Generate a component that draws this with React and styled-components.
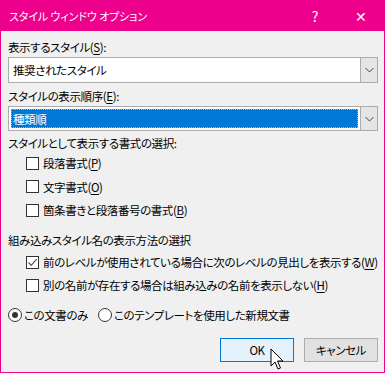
import React from "react";
import styled, { createGlobalStyle } from "styled-components";

const Global = createGlobalStyle`
  html, body { margin: 0; padding: 0; background: #fff; }
  body { font-family: "Noto Sans CJK JP", "Noto Sans", sans-serif; font-size: 11.5px; letter-spacing: -0.4px; color: #000; }
  * { box-sizing: border-box; }
`;

const Window = styled.div`
  position: relative;
  width: 385px;
  height: 373px;
  border: 1px solid #ec008c;
  border-top: none;
  background: #f0f0f0;
  overflow: hidden;
  font-feature-settings: "palt";
`;

const TitleBar = styled.div`
  height: 31px;
  background: #ec008c;
  color: #fff;
  display: flex;
  align-items: center;
  padding-left: 8px;
  font-size: 11px;
`;

const Title = styled.div`
  flex: 1;
  letter-spacing: -0.1px;
`;

const TitleButton = styled.div`
  width: 46px;
  height: 31px;
  display: flex;
  align-items: center;
  justify-content: center;
  font-size: 14px;
  letter-spacing: 0;
`;

const Content = styled.div`
  padding: 8px 6px 0 7px;
  display: flex;
  flex-direction: column;
`;

const Label = styled.div`
  height: 16px;
  line-height: 16px;
  margin-top: ${(p) => p.$mt || 0}px;
  white-space: nowrap;
`;

const U = styled.span`
  text-decoration: underline;
  text-underline-offset: 2px;
`;

const Select = styled.div`
  margin-top: 2px;
  height: ${(p) => p.$h}px;
  border: 1px solid #ababab;
  background: #fff;
  display: flex;
`;

const SelectValue = styled.div`
  flex: 1;
  display: flex;
  align-items: center;
  padding-left: 4px;
`;

const Highlight = styled.div`
  flex: 1;
  margin: 2px;
  background: #0078d7;
  color: #fff;
  border: 1px dotted #f5a23a;
  display: flex;
  align-items: center;
  padding-left: 1px;
`;

const Arrow = styled.div`
  width: 17px;
  background: #e5e5e5;
  border-left: 1px solid #ababab;
  display: flex;
  align-items: center;
  justify-content: center;
`;

const Rows = styled.div`
  display: flex;
  flex-direction: column;
  gap: ${(p) => p.$gap}px;
  margin-top: ${(p) => p.$mt}px;
  padding-left: 18px;
`;

const Row = styled.div`
  display: flex;
  align-items: center;
  height: 16px;
  white-space: nowrap;
`;

const Box = styled.div`
  width: 13px;
  height: 13px;
  border: 1px solid #333;
  background: #fff;
  margin-right: 4px;
  display: flex;
  align-items: center;
  justify-content: center;
  flex-shrink: 0;
`;

const RadioRow = styled.div`
  display: flex;
  align-items: center;
  height: 16px;
  margin-top: 14px;
`;

const RadioItem = styled.div`
  display: flex;
  align-items: center;
  margin-right: ${(p) => p.$mr || 0}px;
`;

const Radio = styled.div`
  width: 14px;
  height: 14px;
  border-radius: 50%;
  border: 1px solid #333;
  background: #fff;
  margin-right: 2px;
  display: flex;
  align-items: center;
  justify-content: center;
  &::after {
    content: "";
    display: ${(p) => (p.$on ? "block" : "none")};
    width: 6px;
    height: 6px;
    border-radius: 50%;
    background: #333;
  }
`;

const Buttons = styled.div`
  display: flex;
  justify-content: flex-end;
  gap: 10px;
  margin-top: 15px;
`;

const Button = styled.div`
  width: 74px;
  height: 24px;
  display: flex;
  align-items: center;
  justify-content: center;
  border: 1px solid ${(p) => (p.$primary ? "#0078d7" : "#adadad")};
  background: ${(p) => (p.$primary ? "#e5f1fb" : "#e1e1e1")};
`;

const Cursor = styled.svg`
  position: absolute;
  left: 269px;
  top: 348px;
`;

const Chevron = () => (
  <svg width="9" height="6" viewBox="0 0 9 6">
    <path d="M0.5 1 L4.5 5 L8.5 1" fill="none" stroke="#444" strokeWidth="1" />
  </svg>
);

const Check = () => (
  <svg width="11" height="11" viewBox="0 0 11 11">
    <path d="M1.5 5.5 L4.2 8.3 L9.6 2.2" fill="none" stroke="#555" strokeWidth="1.2" />
  </svg>
);

export default function App() {
  return (
    <>
      <Global />
      <Window>
        <TitleBar>
          <Title>スタイル ウィンドウ オプション</Title>
          <TitleButton>?</TitleButton>
          <TitleButton>✕</TitleButton>
        </TitleBar>
        <Content>
          <Label>表示するスタイル(<U>S</U>):</Label>
          <Select $h={26}>
            <SelectValue>推奨されたスタイル</SelectValue>
            <Arrow><Chevron /></Arrow>
          </Select>
          <Label $mt={5}>スタイルの表示順序(<U>E</U>):</Label>
          <Select $h={25}>
            <Highlight>種類順</Highlight>
            <Arrow><Chevron /></Arrow>
          </Select>
          <Label $mt={4}>スタイルとして表示する書式の選択:</Label>
          <Rows $gap={7.5} $mt={4}>
            <Row><Box />段落書式(<U>P</U>)</Row>
            <Row><Box />文字書式(<U>O</U>)</Row>
            <Row><Box />箇条書きと段落番号の書式(<U>B</U>)</Row>
          </Rows>
          <Label $mt={14}>組み込みスタイル名の表示方法の選択</Label>
          <Rows $gap={7} $mt={6}>
            <Row><Box><Check /></Box>前のレベルが使用されている場合に次のレベルの見出しを表示する(<U>W</U>)</Row>
            <Row><Box />別の名前が存在する場合は組み込みの名前を表示しない(<U>H</U>)</Row>
          </Rows>
          <RadioRow>
            <RadioItem $mr={10}><Radio $on />この文書のみ</RadioItem>
            <RadioItem><Radio />このテンプレートを使用した新規文書</RadioItem>
          </RadioRow>
          <Buttons>
            <Button $primary>OK</Button>
            <Button>キャンセル</Button>
          </Buttons>
        </Content>
        <Cursor width="14" height="24" viewBox="0 0 14 24">
          <path d="M1 1 L1 18 L5 14 L8 21 L10.5 20 L7.5 13 L13 13 Z" fill="#fff" stroke="#000" strokeWidth="1" />
        </Cursor>
      </Window>
    </>
  );
}
